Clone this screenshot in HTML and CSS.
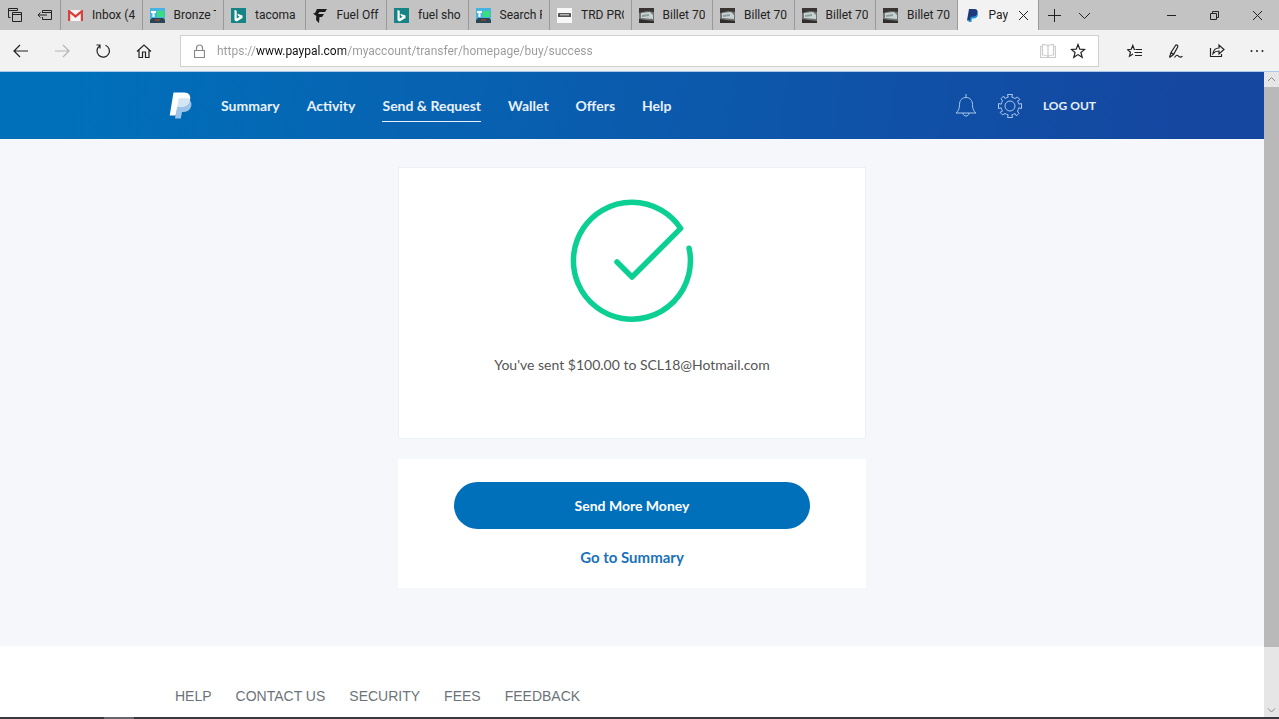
FILE: index.html
```html
<!DOCTYPE html>
<html lang="en">

<head>
    <meta charset="utf-8">
    <title>PayPal</title>
    <link rel="stylesheet" href="styles.css">
</head>

<body>
    <svg class="defs" width="0" height="0" aria-hidden="true">
        <symbol id="fav-bronze" viewBox="0 0 15 15">
            <path fill="#45b5df" d="M0 0h15v15H0z" />
            <path fill="#37e07c" d="M7 3h7v6H7z" />
            <path fill="#fff" d="M1 3h5v2H4.500v4h-2V5H1z" />
            <path fill="#2b4554" d="M0 12l2-2h11l2 2v3H0z" />
            <path fill="#7d4238" d="M5 11h5v2H5z" />
        </symbol>
        <symbol id="fav-bing" viewBox="0 0 15 15">
            <path fill="#168484" d="M0 0h15v15H0z" />
            <path fill="#fff" d="M3.500 2l2.200.8v7.600l3-1.700-1.500-.7-.9-2.300 5.200 1.800v2.600l-5.800 3.400-2.200-1.300z" />
        </symbol>
        <symbol id="fav-billet" viewBox="0 0 15 15">
            <path fill="#6f7371" d="M0 0h15v15H0z" />
            <path fill="#383431" d="M0 0h15v4L8 3 0 5z" />
            <path fill="#c9d2d3" d="M2 5l9-1 3 3v4l-12-1z" />
            <path fill="#8d9c9e" d="M3 7l7-1v2l-7 1z" />
            <path fill="#302d2b" d="M0 11l6 1 9 1v2H0z" />
        </symbol>
    </svg>

    <div class="tabbar">
        <div class="tab-tools">
            <button class="icon-btn" aria-label="Tabs you've set aside">
                <svg width="14" height="14" viewBox="0 0 14 14"><path d="M2.500 9.500h-2v-9h9v2M.5 2.500h9M4.500 4.500h9v9h-9zM4.500 6.500h9" /></svg>
            </button>
            <button class="icon-btn" aria-label="Set these tabs aside">
                <svg width="16" height="12" viewBox="0 0 16 12"><path d="M5.500 4V1.500h9v9h-9V8M5.500 3.500h9M1 6h9M3.500 3.500L1 6l2.500 2.500" /></svg>
            </button>
        </div>
        <div class="tabs">
            <div class="tab">
                <svg class="fav" viewBox="0 0 15 15"><path fill="#f5f5f5" d="M0 2h15v11H0z" /><path fill="#db3f3a" d="M0 13V2h1.500l6 5 6-5H15v11h-2.200V5.500L7.500 10 2.200 5.500V13z" /></svg>
                <button class="tab-name">Inbox (4</button>
            </div>
            <div class="tab">
                <svg class="fav"><use href="#fav-bronze" /></svg>
                <button class="tab-name">Bronze T</button>
            </div>
            <div class="tab">
                <svg class="fav"><use href="#fav-bing" /></svg>
                <button class="tab-name">tacoma</button>
            </div>
            <div class="tab">
                <svg class="fav" viewBox="0 0 15 15"><path fill="#1c1c1c" d="M4 1h10l-2 3H6.500L5 6h6l-2 3H6.500l-.5 6-3-3 .3-4L0 5.500 2 5z" /></svg>
                <button class="tab-name">Fuel Off</button>
            </div>
            <div class="tab">
                <svg class="fav"><use href="#fav-bing" /></svg>
                <button class="tab-name">fuel sho</button>
            </div>
            <div class="tab">
                <svg class="fav"><use href="#fav-bronze" /></svg>
                <button class="tab-name">Search R</button>
            </div>
            <div class="tab">
                <svg class="fav" viewBox="0 0 15 15"><path fill="#f7f7f7" d="M0 0h15v15H0z" /><path fill="#555" d="M1 5.500L2 5h11l1 .5V9H1z" /><path fill="#b5b5b5" d="M3 6h9v1.500H3z" /></svg>
                <button class="tab-name">TRD PRO</button>
            </div>
            <div class="tab">
                <svg class="fav"><use href="#fav-billet" /></svg>
                <button class="tab-name">Billet 70</button>
            </div>
            <div class="tab">
                <svg class="fav"><use href="#fav-billet" /></svg>
                <button class="tab-name">Billet 70</button>
            </div>
            <div class="tab">
                <svg class="fav"><use href="#fav-billet" /></svg>
                <button class="tab-name">Billet 70</button>
            </div>
            <div class="tab">
                <svg class="fav"><use href="#fav-billet" /></svg>
                <button class="tab-name">Billet 70</button>
            </div>
            <div class="tab active">
                <svg class="fav" viewBox="0 0 15 15"><path fill="#1c9ad6" d="M5 5h7.500c1.200 3-1 5.500-4 5.500H7L6.300 14H3.500z" /><path fill="#213a7e" d="M4 1h5.500C12 1 13 2.800 12.500 5c-.6 2.700-2.500 3.800-5 3.800H5.800L5 12.500H2z" /></svg>
                <button class="tab-name">PayPal</button>
                <button class="icon-btn" aria-label="Close tab">
                    <svg width="11" height="11" viewBox="0 0 11 11"><path d="M1 1l9 9M10 1l-9 9" /></svg>
                </button>
            </div>
        </div>
        <div class="new-tab">
            <button class="icon-btn" aria-label="New tab">
                <svg width="13" height="13" viewBox="0 0 13 13"><path d="M6.500 0v13M0 6.500h13" /></svg>
            </button>
            <button class="icon-btn" aria-label="Tab previews">
                <svg width="13" height="13" viewBox="0 0 13 13"><path d="M1 4l5.500 5.500L12 4" /></svg>
            </button>
        </div>
        <div class="window-btns">
            <button class="icon-btn" aria-label="Minimize">
                <svg width="11" height="11" viewBox="0 0 11 11"><path d="M1 5.500h9" /></svg>
            </button>
            <button class="icon-btn" aria-label="Restore">
                <svg width="11" height="11" viewBox="0 0 11 11"><path d="M1.500 3.500h6v6h-6zM3.500 3.500v-2h6v6h-2" /></svg>
            </button>
            <button class="icon-btn" aria-label="Close">
                <svg width="11" height="11" viewBox="0 0 11 11"><path d="M1 1l9 9M10 1l-9 9" /></svg>
            </button>
        </div>
    </div>

    <div class="toolbar">
        <div class="nav-btns">
            <button class="icon-btn" aria-label="Back">
                <svg width="16" height="14" viewBox="0 0 16 14"><path d="M1 7h14M7 1L1 7l6 6" /></svg>
            </button>
            <button class="icon-btn" aria-label="Forward" disabled>
                <svg width="16" height="14" viewBox="0 0 16 14"><path d="M1 7h14M9 1l6 6-6 6" /></svg>
            </button>
            <button class="icon-btn" aria-label="Refresh">
                <svg width="16" height="16" viewBox="0 0 16 16"><path d="M10.500 2.200A6.200 6.200 0 1 1 4.500 3M1.500 2h3.500v3.500" /></svg>
            </button>
            <button class="icon-btn" aria-label="Home">
                <svg width="16" height="16" viewBox="0 0 16 16"><path d="M1 8.500l7-6.500 7 6.500M3 7v7.500h3.500V9h3v5.500H13V7" /></svg>
            </button>
        </div>
        <div class="address">
            <svg width="11" height="14" viewBox="0 0 11 14"><path d="M.5 6.500h10v7H.5zM2.500 6.500V4a3 3 0 0 1 6 0v2.500" /></svg>
            <input class="url" type="text" aria-label="Address" value="https://www.paypal.com/myaccount/transfer/homepage/buy/success">
            <button class="icon-btn reading" aria-label="Reading view" disabled>
                <svg width="16" height="14" viewBox="0 0 16 14"><path d="M8 2v11M8 2C7 .8 5 .5 2.500.5V11c2.500 0 4.500.5 5.500 1.500C9 11.500 11 11 13.500 11V.5C11 .5 9 .8 8 2M2.500 2.500h-2v11h15v-11h-2" /></svg>
            </button>
            <button class="icon-btn" aria-label="Add to favorites">
                <svg width="16" height="16" viewBox="0 0 16 16"><path d="M8 1.500l1.800 4.600 4.900.3-3.800 3.100 1.300 4.800L8 11.600l-4.200 2.700 1.300-4.800-3.800-3.100 4.900-.3z" /></svg>
            </button>
        </div>
        <div class="page-btns">
            <button class="icon-btn" aria-label="Hub">
                <svg width="16" height="16" viewBox="0 0 16 16"><path d="M8 6.500h-.7L5.800 2.500 4.300 6.300l-3.800.4 3 2.500-1 4L6 11M8.500 6.500H15M7.500 9.500H15M8 12.500h7" /></svg>
            </button>
            <button class="icon-btn" aria-label="Add notes">
                <svg width="16" height="16" viewBox="0 0 16 16"><path d="M1.500 14.500l1.500-5 4.500-7c1-1.200 3 0 2.200 1.500L5.500 11.500l-4 3M3 9.500l2.500 2M6.500 14.500c2-3 3-2.500 4-1.300s2 1.300 4 0" /></svg>
            </button>
            <button class="icon-btn" aria-label="Share">
                <svg width="16" height="16" viewBox="0 0 16 16"><path d="M1.500 5v8.500h11V11M4 10.500c.5-3.500 2.500-5.500 6-5.500V2l5 4.500-5 4.500V8c-3 0-4.500.8-6 2.500z" /></svg>
            </button>
            <button class="icon-btn" aria-label="More">
                <svg class="solid" width="14" height="4" viewBox="0 0 14 4"><circle cx="1.500" cy="2" r="1" /><circle cx="7" cy="2" r="1" /><circle cx="12.500" cy="2" r="1" /></svg>
            </button>
        </div>
    </div>

    <div class="viewport">
        <div class="page">
            <header class="header">
                <div class="header-inner">
                    <a class="logo" href="#" aria-label="PayPal">
                        <svg width="24" height="27" viewBox="0 0 24 27">
                            <path fill="#9cc4e8" d="M9 8h11c2.500 1.500 3 4 2 7-1.200 3.500-4 5-8 5h-1l-1.200 6.500H6z" />
                            <path fill="#fff" d="M4.500.5H15c5 0 7 3 6 7.500-1.200 5-4.500 7-9.500 7H8.300L6.500 23.500H.7z" />
                            <path fill="#d4e5f4" d="M9.500 7.500c0-.8.6-1.200 1.500-1.200h7c1.200 0 2.200.3 3 .9-.8 5.500-4.400 7.800-9.600 7.800H8.300z" />
                        </svg>
                    </a>
                    <nav class="menu">
                        <a href="#">Summary</a>
                        <a href="#">Activity</a>
                        <a class="current" href="#">Send &amp; Request</a>
                        <a href="#">Wallet</a>
                        <a href="#">Offers</a>
                        <a href="#">Help</a>
                    </nav>
                    <div class="account">
                        <button class="icon-btn" aria-label="Notifications">
                            <svg width="22" height="25" viewBox="0 0 22 25"><path d="M11 1v4M11 4.500c-4 0-6.500 3-6.500 7 0 4-1 6.500-3.500 8.500h20c-2.500-2-3.500-4.500-3.500-8.500 0-4-2.500-7-6.500-7M8 20c0 4 6 4 6 0" /></svg>
                        </button>
                        <button class="icon-btn" aria-label="Settings">
                            <svg width="26" height="26" viewBox="-13 -13 26 26">
                                <circle r="5" />
                                <path d="M-1.800-8.800L-2.500-11.500H2.500L1.800-8.800A9 9 0 0 1 5-7.500L7.400-8.900 9.900-6.400 7.500-5A9 9 0 0 1 8.800-1.800L11.500-2.500V2.500L8.800 1.800A9 9 0 0 1 7.500 5L8.900 7.400 6.400 9.900 5 7.500A9 9 0 0 1 1.800 8.800L2.500 11.500H-2.500L-1.800 8.800A9 9 0 0 1-5 7.500L-7.400 8.900-9.900 6.400-7.500 5A9 9 0 0 1-8.800 1.800L-11.500 2.500V-2.500L-8.800-1.800A9 9 0 0 1-7.500-5L-8.900-7.400-6.400-9.900-5-7.500A9 9 0 0 1-1.800-8.800z" />
                            </svg>
                        </button>
                        <a class="logout" href="#">LOG OUT</a>
                    </div>
                </div>
            </header>

            <main class="main">
                <section class="card result">
                    <svg class="check" width="124" height="124" viewBox="0 0 124 124"><path d="M47 63l15 15 48.700-48.600A58.500 58.500 0 1 0 119.100 49.300" /></svg>
                    <p class="message">You've sent $100.00 to SCL18@Hotmail.com</p>
                </section>
                <section class="card actions">
                    <button class="send-more">Send More Money</button>
                    <a class="to-summary" href="#">Go to Summary</a>
                </section>
            </main>

            <footer class="footer">
                <nav class="footer-links">
                    <a href="#">HELP</a>
                    <a href="#">CONTACT US</a>
                    <a href="#">SECURITY</a>
                    <a href="#">FEES</a>
                    <a href="#">FEEDBACK</a>
                </nav>
            </footer>
        </div>
        <div class="scrollbar" aria-hidden="true">
            <svg width="15" height="15" viewBox="0 0 15 15"><path d="M4 9l3.500-3.500L11 9" /></svg>
            <div class="track">
                <div class="thumb"></div>
            </div>
            <svg width="15" height="15" viewBox="0 0 15 15"><path d="M4 6.500L7.500 10 11 6.500" /></svg>
        </div>
    </div>
    <div class="taskbar"></div>
</body>

</html>
```

FILE: styles.css
```css
* {
    margin: 0;
    padding: 0;
    box-sizing: border-box;
}

body {
    display: flex;
    flex-direction: column;
    height: 100vh;
    overflow: hidden;
    background: #fff;
    font-family: Lato, sans-serif;
}

a {
    color: inherit;
    text-decoration: none;
}

button {
    border: 0;
    background: none;
    font: inherit;
    color: inherit;
    cursor: pointer;
}

svg {
    flex: none;
    fill: none;
    stroke: currentColor;
}

.defs {
    position: absolute;
}

.icon-btn {
    display: flex;
    align-items: center;
    justify-content: center;
}

.icon-btn:disabled {
    color: #b4b4b4;
}

/* tabs */
.tabbar {
    display: flex;
    flex: none;
    height: 30px;
    background: #c3c3c3;
    color: #222;
    font-family: Roboto, sans-serif;
    font-size: 12px;
}

.tab-tools {
    display: flex;
    align-items: center;
    gap: 15px;
    width: 60px;
    padding-left: 8px;
}

.tabs {
    display: flex;
    flex: 0 1 979px;
    min-width: 0;
}

.tab {
    display: flex;
    flex: 1 1 0;
    min-width: 0;
    align-items: center;
    padding: 0 7px;
    border-left: 1px solid #999;
}

.tab.active {
    background: #f2f2f2;
    border-right: 1px solid #999;
}

.fav {
    width: 15px;
    height: 15px;
    margin-right: 9px;
    stroke: none;
}

.tab-name {
    flex: 1;
    min-width: 0;
    overflow: hidden;
    white-space: nowrap;
    text-align: left;
}

.active .icon-btn {
    width: 16px;
    margin-left: 7px;
}

.new-tab {
    display: flex;
    gap: 17px;
    padding-left: 9px;
}

.window-btns {
    display: flex;
    margin-left: auto;
}

.window-btns .icon-btn {
    width: 43px;
}

/* address bar */
.toolbar {
    display: flex;
    flex: none;
    align-items: center;
    height: 42px;
    background: #f2f2f2;
    border-bottom: 1px solid #a9c9e6;
    color: #222;
}

.toolbar svg {
    stroke-width: 1.2;
}

.toolbar .solid {
    fill: currentColor;
    stroke: none;
}

.nav-btns {
    display: flex;
    gap: 25px;
    width: 180px;
    padding-left: 13px;
}

.address {
    display: flex;
    flex: 1;
    align-items: center;
    height: 32px;
    padding: 0 12px 0 13px;
    background: #fff;
    border: 1px solid #d0d0d0;
}

.address > svg {
    color: #888;
}

.address .icon-btn {
    margin-left: 14px;
}

.address .reading {
    color: #ccc;
}

/* the host part of the address is darker than the rest */
.url {
    flex: 1;
    min-width: 0;
    margin-left: 12px;
    border: 0;
    outline: 0;
    font-family: Roboto, sans-serif;
    font-size: 12px;
    background: linear-gradient(90deg, #999 39px, #111 39px, #111 129px, #999 129px);
    -webkit-background-clip: text;
    background-clip: text;
    color: transparent;
}

.page-btns {
    display: flex;
    gap: 25px;
    width: 180px;
    padding-left: 28px;
}

/* page */
.viewport {
    display: flex;
    flex: 1;
    min-height: 0;
}

.page {
    flex: 1;
    overflow: hidden;
    background: #f5f7fa;
}

.header {
    background: linear-gradient(100deg, #0070ba 5%, #1546a0 95%);
    color: #e8f1fa;
}

.header-inner {
    display: flex;
    align-items: center;
    max-width: 928px;
    height: 67px;
    margin: 0 auto;
}

.logo {
    display: flex;
    margin-left: 1px;
}

.logo svg {
    stroke: none;
}

.menu {
    display: flex;
    gap: 27px;
    margin-left: 28px;
    font-size: 14px;
    font-weight: 700;
}

.menu a {
    padding: 7px 0 5px;
    line-height: 20px;
    border-bottom: 1px solid transparent;
}

.menu .current {
    border-color: #e8f1fa;
}

.account {
    display: flex;
    align-items: center;
    gap: 20px;
    margin-left: auto;
}

.account .icon-btn {
    color: #a9c8ec;
}

.logout {
    font-size: 12px;
    font-weight: 700;
}

.main {
    display: flex;
    flex-direction: column;
    align-items: center;
    gap: 20px;
    padding: 28px 16px 58px;
}

.card {
    display: flex;
    flex-direction: column;
    align-items: center;
    width: 100%;
    max-width: 468px;
    background: #fff;
}

.result {
    padding: 31px 24px 63px;
    border: 1px solid #eceff3;
}

.check {
    color: #0bcf93;
    stroke-width: 5.500;
    stroke-linecap: round;
    stroke-linejoin: round;
}

.message {
    margin-top: 32px;
    color: #555;
    font-size: 14px;
    line-height: 20px;
}

.actions {
    padding: 23px 56px 21px;
    font-weight: 700;
}

.send-more {
    width: 100%;
    height: 47px;
    border-radius: 24px;
    background: #0070ba;
    color: #fff;
    font-size: 14px;
}

.to-summary {
    margin-top: 18px;
    color: #1a72b8;
    font-size: 15px;
    line-height: 20px;
}

.footer {
    height: 100%;
    background: #fff;
}

.footer-links {
    display: flex;
    gap: 24px;
    max-width: 914px;
    margin: 0 auto;
    padding-top: 42px;
    color: #6c7378;
    font-family: "Liberation Sans", sans-serif;
    font-size: 14px;
}

.scrollbar {
    display: flex;
    flex-direction: column;
    width: 15px;
    background: #e6e6e6;
    color: #888;
}

.track {
    flex: 1;
}

.thumb {
    height: 91%;
    background: #b9b9b9;
}

.taskbar {
    flex: none;
    height: 2px;
    background: linear-gradient(90deg, #37393c 104px, #66686b 104px, #66686b 134px, #37393c 134px);
}
```
